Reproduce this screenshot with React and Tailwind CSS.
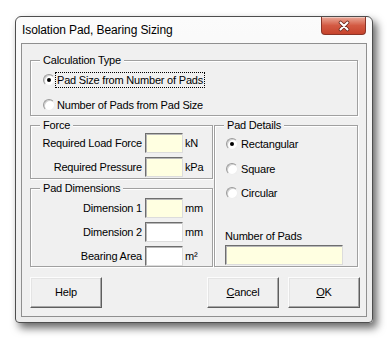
import React from 'react';

const font = { fontFamily: '"Liberation Sans", Arial, sans-serif' };

function Radio({ checked }) {
  return (
    <span className="w-[12px] h-[12px] shrink-0 rounded-full bg-white border border-t-[#9a9a9a] border-l-[#9a9a9a] border-r-[#eeeeee] border-b-[#eeeeee] shadow-[inset_1px_1px_0_#d0d0d0] flex items-center justify-center">
      {checked && <span className="w-[4px] h-[4px] rounded-full bg-black" />}
    </span>
  );
}

function TextBox({ yellow, className = '' }) {
  return (
    <div
      className={`h-[20px] border border-t-[#6e6e6e] border-l-[#6e6e6e] border-r-[#dcdcdc] border-b-[#dcdcdc] shadow-[inset_1px_1px_0_#b8b8b8] ${
        yellow ? 'bg-[#ffffe1]' : 'bg-white'
      } ${className}`}
    />
  );
}

function Group({ title, className = '', children }) {
  return (
    <fieldset className={`border border-[#a0a0a0] shadow-[1px_1px_0_#fff,inset_1px_1px_0_#fff] ${className}`}>
      <legend className="ml-[9px] px-[3px] leading-[14px] bg-[#f0f0f0]">{title}</legend>
      {children}
    </fieldset>
  );
}

function FieldRow({ label, unit, yellow, className = '' }) {
  return (
    <div className={`flex items-center h-[20px] ${className}`}>
      <span className="w-[111px] text-right whitespace-nowrap">{label}</span>
      <TextBox yellow={yellow} className="ml-[3px] w-[38px]" />
      <span className="ml-[2px]">{unit}</span>
    </div>
  );
}

function Button({ children, className = '' }) {
  return (
    <button className={`w-[72px] h-[31px] bg-[#f0f0f0] border border-t-[#fcfcfc] border-l-[#fcfcfc] border-r-[#5e5e5e] border-b-[#5e5e5e] shadow-[inset_-1px_-1px_0_#a8a8a8,inset_1px_1px_0_#e4e4e4] flex items-center justify-center text-black ${className}`}>
      {children}
    </button>
  );
}

export default function App() {
  return (
    <div className="w-[390px] h-[340px] bg-white pt-[16px] pl-[15px] text-[11px] tracking-[-0.2px] text-black" style={font}>
      <div className="w-[358px] h-[307px] flex flex-col border border-[#4e4e4e] rounded-t-[6px] rounded-b-[4px] bg-gradient-to-b from-[#fbfbfb] to-[#ececec] shadow-[4px_5px_8px_rgba(0,0,0,0.6)]">
        {/* title bar */}
        <div className="h-[26px] flex items-start justify-between">
          <span className="pl-[6px] pt-[6px] text-[12px] tracking-[-0.1px] leading-[14px] text-black">
            Isolation Pad, Bearing Sizing
          </span>
          <div className="mr-[6px] w-[45px] h-[18px] rounded-b-[4px] border border-t-0 border-[#8a3427] bg-gradient-to-b from-[#e9a898] via-[#d35a43] to-[#c6432c] flex items-center justify-center shadow-[inset_0_1px_0_rgba(255,255,255,0.4)]">
            <svg width="14" height="12" viewBox="0 0 14 12">
              <path d="M3.5 2.5 L10.5 9.5 M10.5 2.5 L3.5 9.5" stroke="#6b2a20" strokeWidth="3.6" strokeLinecap="round" />
              <path d="M3.5 2.5 L10.5 9.5 M10.5 2.5 L3.5 9.5" stroke="#ffffff" strokeWidth="2" strokeLinecap="round" />
            </svg>
          </div>
        </div>

        {/* client area */}
        <div className="flex-1 mx-[5px] mb-[5px] border border-[#8f8f8f] bg-[#f0f0f0] pt-[9px] pl-[8px]">
          <Group title="Calculation Type" className="w-[328px] h-[63px]">
            <div className="mt-[3px] ml-[12px] flex items-center h-[20px]">
              <Radio checked />
              <span className="ml-[1px] px-[1px] leading-[14px] outline outline-1 outline-dotted outline-black">
                Pad Size from Number of Pads
              </span>
            </div>
            <div className="mt-[5px] ml-[12px] flex items-center h-[20px]">
              <Radio />
              <span className="ml-[2px]">Number of Pads from Pad Size</span>
            </div>
          </Group>

          <div className="mt-[2px] flex gap-[1px]">
            <div className="flex flex-col w-[183px]">
              <Group title="Force" className="h-[61px]">
                <FieldRow label="Required Load Force" unit="kN" yellow className="mt-[1px]" />
                <FieldRow label="Required Pressure" unit="kPa" yellow className="mt-[4px]" />
              </Group>
              <Group title="Pad Dimensions" className="mt-[2px] h-[86px]">
                <FieldRow label="Dimension 1" unit="mm" yellow className="mt-[3px]" />
                <FieldRow label="Dimension 2" unit="mm" className="mt-[4px]" />
                <FieldRow label="Bearing Area" unit="m²" className="mt-[4px]" />
              </Group>
            </div>
            <Group title="Pad Details" className="w-[144px] h-[149px]">
              <div className="mt-[2px] ml-[11px] flex items-center h-[20px] gap-[3px]">
                <Radio checked />
                <span>Rectangular</span>
              </div>
              <div className="mt-[5px] ml-[11px] flex items-center h-[20px] gap-[3px]">
                <Radio />
                <span>Square</span>
              </div>
              <div className="mt-[4px] ml-[11px] flex items-center h-[20px] gap-[3px]">
                <Radio />
                <span>Circular</span>
              </div>
              <div className="mt-[26px] ml-[10px] leading-[14px]">Number of Pads</div>
              <TextBox yellow className="mt-[2px] ml-[10px] w-[118px]" />
            </Group>
          </div>

          <div className="mt-[10px] flex">
            <Button>Help</Button>
            <Button className="ml-[105px] w-[71px]">
              <span><span className="underline">C</span>ancel</span>
            </Button>
            <Button className="ml-[9px] w-[71px]">
              <span><span className="underline">O</span>K</span>
            </Button>
          </div>
        </div>
      </div>
    </div>
  );
}
